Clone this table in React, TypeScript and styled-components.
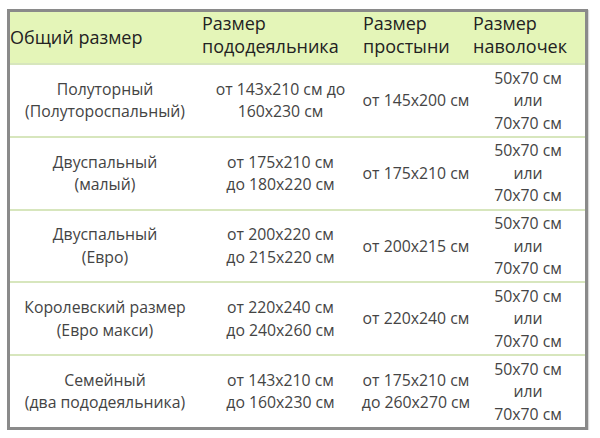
import React from "react";
import styled, { createGlobalStyle } from "styled-components";

const Global = createGlobalStyle`
  html, body { margin: 0; padding: 0; background: #fff; }
  body { font-family: "Open Sans", "Noto Sans", sans-serif; }
`;

const Page = styled.div`
  padding: 9px 0 0 7px;
`;

const Table = styled.table`
  box-sizing: border-box;
  width: 581px;
  border-collapse: separate;
  border-spacing: 0;
  border: 3px solid #8a8a8a;
  box-shadow: 1px 1px 1px rgba(0, 0, 0, 0.15);
  table-layout: fixed;
`;

const Col = styled.col<{ $w: number }>`
  width: ${(p) => p.$w}px;
`;

const HeadRow = styled.tr`
  background: #e4f5b8;
`;

const HeadCell = styled.th<{ $pl?: number; $single?: boolean }>`
  height: 51px;
  padding: 0 0 0 ${(p) => p.$pl ?? 2}px;
  text-align: left;
  vertical-align: ${(p) => (p.$single ? "middle" : "top")};
  font-weight: 400;
  font-size: 18px;
  line-height: 23px;
  color: #222;
  white-space: nowrap;
`;

const Cell = styled.td`
  height: 70.75px;
  padding: 0;
  border-top: 2px solid #d7e6bd;
  text-align: center;
  vertical-align: middle;
  font-size: 15.8px;
  line-height: 22.5px;
  color: #444;
  white-space: nowrap;
`;

type R = [string[], string[], string[]];

const rows: R[] = [
  [["Полуторный", "(Полутороспальный)"], ["от 143x210 см до", "160x230 см"], ["от 145x200 см"]],
  [["Двуспальный", "(малый)"], ["от 175x210 см", "до 180x220 см"], ["от 175x210 см"]],
  [["Двуспальный", "(Евро)"], ["от 200x220 см", "до 215x220 см"], ["от 200x215 см"]],
  [["Королевский размер", "(Евро макси)"], ["от 220x240 см", "до 240x260 см"], ["от 220x240 см"]],
  [["Семейный", "(два пододеяльника)"], ["от 143x210 см", "до 160x230 см"], ["от 175x210 см", "до 260x270 см"]],
];

const Lines = ({ l }: { l: string[] }) => (
  <>
    {l.map((t, i) => (
      <React.Fragment key={i}>
        {i > 0 && <br />}
        {t}
      </React.Fragment>
    ))}
  </>
);

export default function App() {
  return (
    <Page>
      <Global />
      <Table>
        <colgroup>
          <Col $w={190} />
          <Col $w={161} />
          <Col $w={110} />
          <Col $w={114} />
        </colgroup>
        <thead>
          <HeadRow>
            <HeadCell $pl={0} $single>
              Общий размер
            </HeadCell>
            <HeadCell>
              Размер
              <br />
              пододеяльника
            </HeadCell>
            <HeadCell>
              Размер
              <br />
              простыни
            </HeadCell>
            <HeadCell>
              Размер
              <br />
              наволочек
            </HeadCell>
          </HeadRow>
        </thead>
        <tbody>
          {rows.map((r, i) => (
            <tr key={i}>
              <Cell><Lines l={r[0]} /></Cell>
              <Cell><Lines l={r[1]} /></Cell>
              <Cell><Lines l={r[2]} /></Cell>
              <Cell><Lines l={["50x70 см", "или", "70x70 см"]} /></Cell>
            </tr>
          ))}
        </tbody>
      </Table>
    </Page>
  );
}
